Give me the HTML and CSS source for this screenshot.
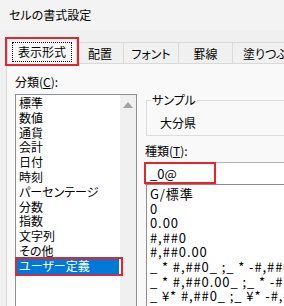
FILE: index.html
```html
<!DOCTYPE html>
<html lang="ja">
<head>
    <meta charset="UTF-8">
    <title>セルの書式設定</title>
    <link rel="stylesheet" href="styles.css">
</head>
<body>
    <div class="titlebar">セルの書式設定</div>
    <div class="dialog">
        <div class="tabs">
            <div class="tab active"><span class="focus">表示形式</span></div>
            <div class="tab w-haichi">配置</div>
            <div class="tab w-font">フォント</div>
            <div class="tab w-keisen">罫線</div>
            <div class="tab w-nuri">塗りつぶし</div>
        </div>
        <div class="page">
            <div class="col-left">
                <div class="label">分類(<u>C</u>):</div>
                <div class="listbox">
                    <div class="items">
                        <div class="item">標準</div>
                        <div class="item">数値</div>
                        <div class="item">通貨</div>
                        <div class="item">会計</div>
                        <div class="item">日付</div>
                        <div class="item">時刻</div>
                        <div class="item">パーセンテージ</div>
                        <div class="item">分数</div>
                        <div class="item">指数</div>
                        <div class="item">文字列</div>
                        <div class="item">その他</div>
                        <div class="item selected">ユーザー定義</div>
                    </div>
                    <div class="scrollbar"><span class="arrow-up"></span></div>
                </div>
            </div>
            <div class="col-right">
                <fieldset class="sample">
                    <legend>サンプル</legend>
                    <div class="sample-value">大分県</div>
                </fieldset>
                <div class="label kind">種類(<u>T</u>):</div>
                <div class="textbox">_0@</div>
                <div class="formats">
                    <div class="item">G/標準</div>
                    <div class="item">0</div>
                    <div class="item">0.00</div>
                    <div class="item">#,##0</div>
                    <div class="item">#,##0.00</div>
                    <div class="item">_ * #,##0_ ;_ * -#,##0_ ;_ * "-"_ ;_ @_ </div>
                    <div class="item">_ * #,##0.00_ ;_ * -#,##0.00_ ;_ * "-"??_ ;_ @_ </div>
                    <div class="item">_ ¥* #,##0_ ;_ ¥* -#,##0_ ;_ ¥* "-"_ ;_ @_ </div>
                </div>
            </div>
        </div>
    </div>

    <!-- red annotation boxes -->
    <div class="mark mark-tab"></div>
    <div class="mark mark-type"></div>
    <div class="mark mark-user"></div>
</body>
</html>
```

FILE: styles.css
```css
body {
    margin: 0;
    width: 284px;
    height: 306px;
    overflow: hidden;
    position: relative;
    font-family: "Noto Sans CJK JP", "Noto Sans", sans-serif;
    font-size: 12px;
    font-feature-settings: "palt";
    color: #000;
    background-color: #f0f0f0;
}
.titlebar {
    height: 30px;
    line-height: 30px;
    padding-left: 9px;
    background-color: #f3f3f3;
}
.dialog {
    padding: 7px 0 0 6px;
}
.tabs {
    display: flex;
    align-items: flex-end;
    height: 26px;
    padding-left: 1px;
    position: relative;
    z-index: 2;
}
.tab {
    height: 21px;
    line-height: 21px;
    text-align: center;
    box-sizing: border-box;
    border: 1px solid #d9d9d9;
    border-bottom: none;
    margin-left: -1px;
    background-color: #f0f0f0;
    white-space: nowrap;
    flex-shrink: 0;
}
.tab.active {
    width: 70px;
    height: 27px;
    margin-left: 0;
    margin-bottom: -1px;
    background-color: #f9f9f9;
    padding-top: 4px;
    line-height: 18px;
}
.focus {
    display: inline-block;
    padding: 0 5px;
    line-height: 18px;
    border: 1px dotted #000;
}
.w-haichi { width: 48px; }
.w-font { width: 56px; }
.w-keisen { width: 55px; }
.w-nuri { width: 70px; text-align: left; padding-left: 10px; }
.page {
    display: flex;
    gap: 8px;
    height: 260px;
    padding-left: 8px;
    border: 1px solid #d9d9d9;
    border-right: none;
    background-color: #f9f9f9;
}
.col-left {
    width: 122px;
    flex-shrink: 0;
}
.label {
    margin-top: 9px;
    line-height: 18px;
}
.label u {
    text-underline-offset: 1px;
}
.listbox {
    margin-top: 3px;
    height: 240px;
    display: flex;
    border: 1px solid #8e8f93;
    background-color: #fff;
}
.items {
    flex: 1;
    padding: 1px 1px 0 1px;
}
.item {
    height: 14.8px;
    line-height: 14.8px;
    padding-left: 2px;
    white-space: nowrap;
}
.item.selected {
    background-color: #0078d7;
    color: #fff;
}
.scrollbar {
    width: 16px;
    background-color: #f0f0f0;
    display: flex;
    justify-content: center;
}
.arrow-up {
    margin-top: 7px;
    width: 0;
    height: 0;
    border-left: 5px solid transparent;
    border-right: 5px solid transparent;
    border-bottom: 6px solid #a3a3a3;
}
.col-right {
    width: 220px;
    flex-shrink: 0;
}
.sample {
    margin: 29px 0 0 1px;
    padding: 0 0 4px 13px;
    border: 1px solid #dcdcdc;
}
.sample legend {
    margin-left: -9px;
    padding: 0 1px;
    line-height: 14px;
}
.sample-value {
    margin-top: 8px;
    line-height: 16px;
}
.kind {
    margin-top: 6px;
}
.textbox {
    margin-top: 2px;
    height: 21px;
    line-height: 21px;
    padding-left: 4px;
    font-size: 13px;
    border: 1px solid #b4b4b4;
    border-bottom: 1px solid #8a8a8a;
    background-color: #fff;
}
.formats {
    margin-left: 1px;
    height: 140px;
    padding-top: 2px;
    border: 1px solid #8e8f93;
    border-top: none;
    background-color: #fff;
}
.formats .item {
    height: 14.6px;
    line-height: 14.6px;
    padding-left: 3px;
    font-size: 13px;
    letter-spacing: 0.9px;
}
.mark {
    position: absolute;
    box-sizing: border-box;
    border: 2px solid #e8232b;
    z-index: 5;
}
.mark-tab {
    left: 5px;
    top: 37px;
    width: 74px;
    height: 29px;
}
.mark-type {
    left: 144px;
    top: 162px;
    width: 72px;
    height: 22px;
}
.mark-user {
    left: 15px;
    top: 257px;
    width: 108px;
    height: 19px;
}
```
